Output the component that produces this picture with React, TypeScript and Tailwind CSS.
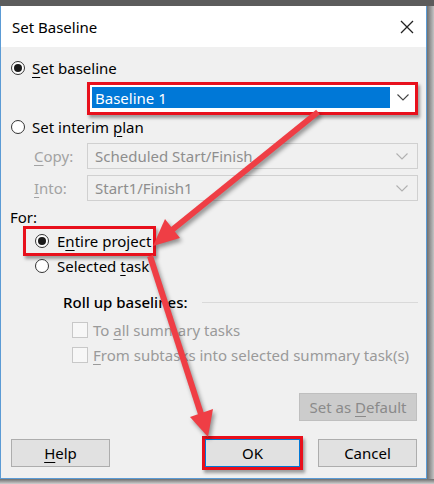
import React from 'react'

const font = { fontFamily: '"Noto Sans", "Liberation Sans", sans-serif' }

function Radio({ checked = false }: { checked?: boolean }) {
  return (
    <span className="w-[14px] h-[14px] rounded-full border border-[#333333] bg-white flex items-center justify-center shrink-0">
      {checked && <span className="w-[8px] h-[8px] rounded-full bg-[#1a1a1a]" />}
    </span>
  )
}

function Chevron({ color = '#555555' }: { color?: string }) {
  return (
    <svg width="12" height="7" viewBox="0 0 12 7" fill="none">
      <path d="M0.5 0.5 L6 6 L11.5 0.5" stroke={color} strokeWidth="1.1" />
    </svg>
  )
}

function U({ children }: { children: React.ReactNode }) {
  return <span className="underline underline-offset-[3px] decoration-1">{children}</span>
}

export default function App() {
  return (
    <div className="w-[434px] h-[484px] relative overflow-hidden bg-[#9a9a9a] text-[15px] leading-[20px] text-black" style={font}>
      {/* 윗 테두리 */}
      <div className="h-[6px] bg-[#5c5c5c]" />

      <div className="flex h-[473px]">
        {/* 대화상자 본체 */}
        <div className="w-[427px] border-l border-r border-b border-[#5b9bd5] bg-[#f0f0f0] flex flex-col">
          {/* 제목 표시줄 */}
          <div className="h-[41px] bg-white flex items-center justify-between pl-[11px] pr-[12px]">
            <span>Set Baseline</span>
            <svg width="14" height="14" viewBox="0 0 14 14" fill="none">
              <path d="M1 1 L13 13 M13 1 L1 13" stroke="#222222" strokeWidth="1.3" />
            </svg>
          </div>

          {/* Set baseline */}
          <div className="mt-[11px] h-[20px] flex items-center pl-[10px] gap-[7px]">
            <Radio checked />
            <span><U>S</U>et baseline</span>
          </div>

          <div className="mt-[4px] ml-[86px] w-[331px] h-[33px] border-[3px] border-[#e8101c] bg-white p-[2px] flex items-start shadow-[2px_3px_3px_rgba(0,0,0,0.35)]">
            <div className="w-[298px] h-[21px] bg-[#0078d7] text-white pl-[3px] flex items-center">Baseline 1</div>
            <div className="flex-1 h-[21px] flex items-center justify-center pl-[3px]">
              <Chevron color="#444444" />
            </div>
          </div>

          {/* Set interim plan */}
          <div className="mt-[2px] h-[20px] flex items-center pl-[10px] gap-[7px]">
            <Radio />
            <span>Set interim <U>p</U>lan</span>
          </div>

          <div className="mt-[6px] h-[26px] flex items-center">
            <span className="ml-[33px] w-[53px] text-[#a3a3a3]"><U>C</U>opy:</span>
            <div className="w-[331px] h-[26px] border border-[#d0d0d0] bg-[#f0f0f0] flex items-center justify-between pl-[7px] pr-[9px] text-[#8e8e8e]">
              <span>Scheduled Start/Finish</span>
              <Chevron color="#b0b0b0" />
            </div>
          </div>

          <div className="mt-[6px] h-[26px] flex items-center">
            <span className="ml-[33px] w-[53px] text-[#a3a3a3]"><U>I</U>nto:</span>
            <div className="w-[331px] h-[26px] border border-[#d0d0d0] bg-[#f0f0f0] flex items-center justify-between pl-[7px] pr-[9px] text-[#8e8e8e]">
              <span>Start1/Finish1</span>
              <Chevron color="#b0b0b0" />
            </div>
          </div>

          {/* For */}
          <div className="mt-[7px] h-[18px] flex items-center pl-[9px]">For:</div>

          <div className="ml-[22px] w-[133px] h-[30px] border-[3px] border-[#e8101c] flex items-center pl-[9px] gap-[8px] shadow-[2px_3px_3px_rgba(0,0,0,0.35)]">
            <Radio checked />
            <span>E<U>n</U>tire project</span>
          </div>

          <div className="h-[20px] flex items-center ml-[34px] gap-[8px]">
            <Radio />
            <span>Selected <U>t</U>ask</span>
          </div>

          {/* Roll up baselines */}
          <div className="mt-[16px] h-[20px] flex items-center ml-[62px] pr-[8px] gap-[14px]">
            <span className="font-medium">Roll up baselines:</span>
            <div className="flex-1 h-px bg-[#d9d9d9]" />
          </div>

          <div className="mt-[8px] h-[20px] flex items-center ml-[71px] gap-[5px] text-[#9a9a9a]">
            <span className="w-[16px] h-[16px] border border-[#c8c8c8] bg-[#f7f7f7]" />
            <span>To <U>a</U>ll summary tasks</span>
          </div>

          <div className="mt-[5px] h-[20px] flex items-center ml-[71px] gap-[5px] text-[#9a9a9a]">
            <span className="w-[16px] h-[16px] border border-[#c8c8c8] bg-[#f7f7f7]" />
            <span><U>F</U>rom subtasks into selected summary task(s)</span>
          </div>

          {/* Set as Default */}
          <div className="mt-[28px] flex justify-end pr-[9px]">
            <div className="w-[118px] h-[28px] bg-[#cccccc] border border-[#bfbfbf] flex items-center justify-center text-[#8a8a8a]">
              <span>Set as <U>D</U>efault</span>
            </div>
          </div>

          {/* 하단 버튼 */}
          <div className="mt-[15px] h-[34px] flex items-center">
            <div className="ml-[10px] w-[99px] h-[28px] bg-[#e1e1e1] border border-[#adadad] flex items-center justify-center">
              <span><U>H</U>elp</span>
            </div>
            <div className="ml-[92px] w-[101px] h-[34px] border-[3px] border-[#e8101c] shadow-[2px_3px_3px_rgba(0,0,0,0.35)]">
              <div className="w-full h-full bg-[#e1e1e1] border border-[#0078d7] flex items-center justify-center">OK</div>
            </div>
            <div className="ml-[15px] w-[99px] h-[28px] bg-[#e1e1e1] border border-[#adadad] flex items-center justify-center">
              Cancel
            </div>
          </div>
        </div>
        <div className="flex-1 bg-gradient-to-r from-[#6f6f6f] to-[#c4c4c4]" />
      </div>
      <div className="h-[5px] bg-gradient-to-b from-[#6f6f6f] to-[#d0d0d0]" />

      {/* 빨간 화살표 */}
      <svg
        className="absolute inset-0 pointer-events-none drop-shadow-[2px_3px_2px_rgba(0,0,0,0.4)]"
        width="434"
        height="484"
        viewBox="0 0 434 484"
      >
        <line x1="318" y1="112" x2="172" y2="230" stroke="#ef3e45" strokeWidth="6" />
        <polygon points="153,246 180,238 165,219" fill="#ef3e45" />
        <line x1="150" y1="256" x2="201" y2="414" stroke="#ef3e45" strokeWidth="6" />
        <polygon points="208,437 213,409 190,417" fill="#ef3e45" />
      </svg>
    </div>
  )
}
